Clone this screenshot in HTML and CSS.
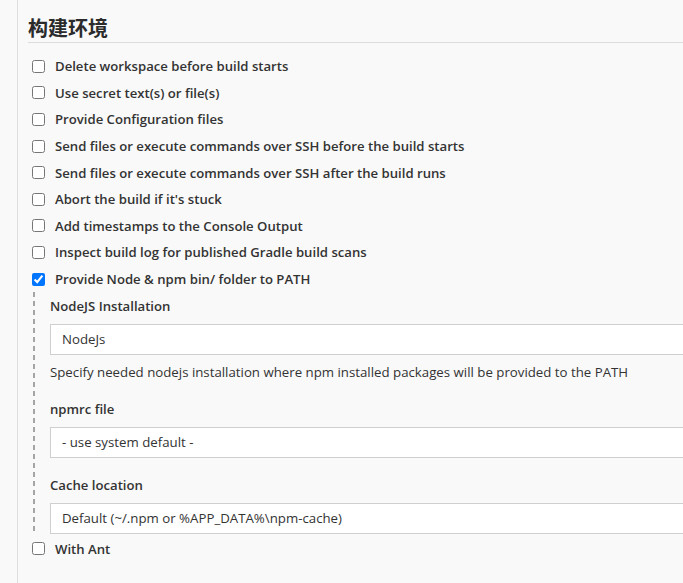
FILE: index.html
```html
<!DOCTYPE html>
<html lang="zh">
<head>
<meta charset="utf-8">
<title>构建环境</title>
<link rel="stylesheet" href="styles.css">
</head>
<body>
<div class="page">
  <section class="section">
    <h2 class="section-title">构建环境</h2>
    <div class="options">
      <label class="opt"><input type="checkbox"><span>Delete workspace before build starts</span></label>
      <label class="opt"><input type="checkbox"><span>Use secret text(s) or file(s)</span></label>
      <label class="opt"><input type="checkbox"><span>Provide Configuration files</span></label>
      <label class="opt"><input type="checkbox"><span>Send files or execute commands over SSH before the build starts</span></label>
      <label class="opt"><input type="checkbox"><span>Send files or execute commands over SSH after the build runs</span></label>
      <label class="opt"><input type="checkbox"><span>Abort the build if it's stuck</span></label>
      <label class="opt"><input type="checkbox"><span>Add timestamps to the Console Output</span></label>
      <label class="opt"><input type="checkbox"><span>Inspect build log for published Gradle build scans</span></label>
      <label class="opt"><input type="checkbox" checked><span>Provide Node &amp; npm bin/ folder to PATH</span></label>
      <div class="nested">
        <div class="field">
          <div class="field-label">NodeJS Installation</div>
          <div class="box">NodeJs</div>
          <div class="desc">Specify needed nodejs installation where npm installed packages will be provided to the PATH</div>
        </div>
        <div class="field">
          <div class="field-label">npmrc file</div>
          <div class="box">- use system default -</div>
        </div>
        <div class="field">
          <div class="field-label">Cache location</div>
          <div class="box">Default (~/.npm or %APP_DATA%\npm-cache)</div>
        </div>
      </div>
      <label class="opt"><input type="checkbox"><span>With Ant</span></label>
    </div>
  </section>
</div>
</body>
</html>
```
FILE: styles.css
```css
html, body {
  margin: 0;
  padding: 0;
  background: #f9f9f9;
  overflow: hidden;
}
body {
  font-family: "Open Sans", "Noto Sans", "Noto Sans CJK SC", sans-serif;
  color: #333;
}
.page {
  height: 583px;
  padding-left: 17px;
}
.section {
  border-left: 1px solid #dedede;
  padding-left: 10px;
  padding-top: 14px;
  height: 100%;
  box-sizing: border-box;
}
.section-title {
  margin: 0;
  font-family: "Noto Sans CJK SC", sans-serif;
  font-size: 20px;
  font-weight: 700;
  line-height: 28px;
  color: #2b2b2b;
  border-bottom: 1px solid #dcdcdc;
}
.options {
  padding-top: 10px;
  display: flex;
  flex-direction: column;
}
.opt {
  display: flex;
  align-items: center;
  height: 26.6px;
  font-size: 13.15px;
  font-weight: 600;
}
.opt input {
  margin: 0 3px 0 4px;
  width: 13px;
  height: 13px;
}
.opt span {
  margin-left: 7px;
}
.nested {
  margin-left: 5px;
  padding-left: 17px;
  padding-top: 4px;
  padding-bottom: 1px;
  background-image: repeating-linear-gradient(to bottom, #a5a5a5 0 5px, transparent 5px 9px);
  background-size: 2px 100%;
  background-repeat: no-repeat;
  background-position: 0 0;
  display: flex;
  flex-direction: column;
  gap: 17px;
}
.field {
  display: flex;
  flex-direction: column;
}
.field-label {
  font-size: 13.15px;
  font-weight: 600;
  line-height: 20px;
  margin-bottom: 8px;
}
.box {
  height: 31px;
  box-sizing: border-box;
  border: 1px solid #cfcfcf;
  border-right: none;
  background: #fff;
  font-size: 13.25px;
  line-height: 29px;
  padding-left: 11px;
  color: #333;
}
.desc {
  font-size: 13.25px;
  line-height: 20px;
  margin-top: 7px;
}
```
